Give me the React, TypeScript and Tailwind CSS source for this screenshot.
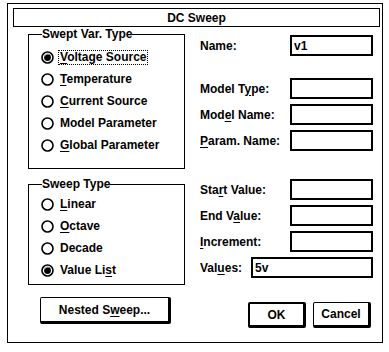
import React from "react";

const font = { fontFamily: '"Liberation Sans", Arial, sans-serif' };

const U = ({ children }: { children: React.ReactNode }) => (
  <span className="underline underline-offset-[2px] decoration-1">{children}</span>
);

const RadioDot = ({ checked }: { checked?: boolean }) => (
  <svg width="13" height="13" viewBox="0 0 13 13" className="shrink-0">
    <circle cx="6.5" cy="6.5" r="5.5" fill="white" stroke="black" strokeWidth="1.6" />
    {checked && (
      <>
        <circle cx="6.5" cy="6.5" r="3.4" fill="black" />
        <path d="M3.2 5.2 A3.6 3.6 0 0 1 7.8 3.1" stroke="#c0c0c0" strokeWidth="1.2" fill="none" />
      </>
    )}
  </svg>
);

const Radio = ({ label, checked, focused }: { label: React.ReactNode; checked?: boolean; focused?: boolean }) => (
  <div className="h-[22px] flex items-center gap-[4px]">
    <RadioDot checked={checked} />
    <span className={focused ? "border border-dotted border-black px-[1px] leading-[13px]" : "px-[2px] leading-[13px]"}>
      {label}
    </span>
  </div>
);

const Field = ({
  label,
  value,
  labelW,
  inputW,
  className,
}: {
  label: React.ReactNode;
  value?: string;
  labelW: string;
  inputW: string;
  className?: string;
}) => (
  <div className={"flex items-center h-[21px] " + (className ?? "")}>
    <div className={labelW}>{label}</div>
    <div className={inputW + " h-[21px] border-2 border-black flex items-center px-[2px]"}>{value}</div>
  </div>
);

export default function App() {
  return (
    <div className="w-[389px] h-[352px] bg-white pt-[3px] pl-[7px] text-black text-[12px] font-bold" style={font}>
      <div className="w-[376px] h-[340px] border border-black flex flex-col">
        <div className="mt-[4px] ml-[5px] mr-[2px] h-[19px] border border-black flex items-center justify-center">
          DC Sweep
        </div>
        <div className="flex">
          <div className="ml-[20px] w-[157px] flex flex-col">
            <fieldset className="h-[142px] border border-black pl-[12px] pt-[5px]">
              <legend className="leading-[14px] ml-[1px]">Swept Var. Type</legend>
              <Radio checked focused label={<><U>V</U>oltage Source</>} />
              <Radio label={<><U>T</U>emperature</>} />
              <Radio label={<><U>C</U>urrent Source</>} />
              <Radio label="Model Parameter" />
              <Radio label={<><U>G</U>lobal Parameter</>} />
            </fieldset>
            <fieldset className="mt-[8px] h-[108px] border border-black pl-[12px] pt-[2px]">
              <legend className="leading-[14px] ml-[1px]">Sweep Type</legend>
              <Radio label={<><U>L</U>inear</>} />
              <Radio label={<><U>O</U>ctave</>} />
              <Radio label="Decade" />
              <Radio checked label={<>Value Li<U>s</U>t</>} />
            </fieldset>
            <button className="mt-[12px] ml-[12px] w-[131px] h-[27px] border border-black border-r-[3px] border-b-[3px] rounded-[2px] bg-white font-bold">
              Nested S<U>w</U>eep...
            </button>
          </div>
          <div className="ml-[15px] flex flex-col">
            <Field className="mt-[8px]" labelW="w-[90px]" inputW="w-[83px]" label="Name:" value="v1" />
            <Field className="mt-[22px]" labelW="w-[90px]" inputW="w-[83px]" label={<>Model T<U>y</U>pe:</>} />
            <Field className="mt-[5px]" labelW="w-[90px]" inputW="w-[83px]" label={<>Mod<U>e</U>l Name:</>} />
            <Field className="mt-[5px]" labelW="w-[90px]" inputW="w-[83px]" label={<><U>P</U>aram. Name:</>} />
            <Field className="mt-[28px]" labelW="w-[90px]" inputW="w-[83px]" label={<>Sta<U>r</U>t Value:</>} />
            <Field className="mt-[5px]" labelW="w-[90px]" inputW="w-[83px]" label={<>End V<U>a</U>lue:</>} />
            <Field className="mt-[5px]" labelW="w-[90px]" inputW="w-[83px]" label={<><U>I</U>ncrement:</>} />
            <Field className="mt-[5px]" labelW="w-[51px]" inputW="w-[122px]" label={<>Val<U>u</U>es:</>} value="5v" />
            <div className="mt-[24px] flex justify-end gap-[7px] pr-[2px]">
              <button className="w-[58px] h-[26px] border-2 border-black border-r-[3px] border-b-[3px] rounded-[2px] bg-white font-bold">
                OK
              </button>
              <button className="w-[58px] h-[26px] border border-black border-r-[3px] border-b-[3px] rounded-[2px] bg-white font-bold">
                Cancel
              </button>
            </div>
          </div>
        </div>
      </div>
    </div>
  );
}
